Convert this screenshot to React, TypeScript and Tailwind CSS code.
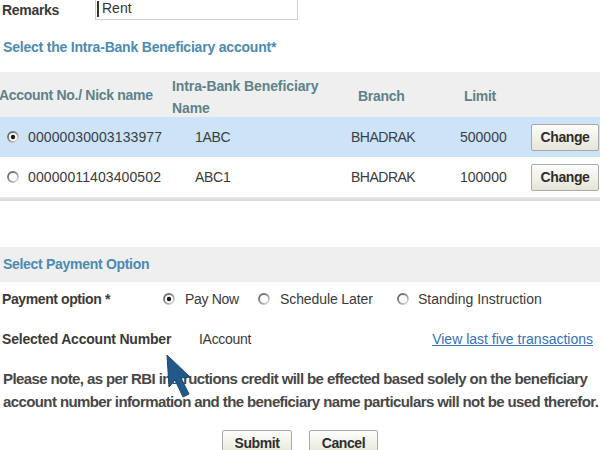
import React from "react";

function Radio({ checked }: { checked?: boolean }) {
  return (
    <svg width="12" height="12" viewBox="0 0 12 12" className="shrink-0">
      <defs>
        <linearGradient id={checked ? "rg1" : "rg0"} x1="0" y1="0" x2="1" y2="1">
          <stop offset="0" stopColor="#5a5a5a" />
          <stop offset="0.5" stopColor="#8f8f8f" />
          <stop offset="1" stopColor="#eeeeee" />
        </linearGradient>
      </defs>
      <circle cx="6" cy="6" r="5" fill="#fbfbfb" stroke={`url(#${checked ? "rg1" : "rg0"})`} strokeWidth="1.8" />
      {checked && <circle cx="6" cy="6" r="2.2" fill="#1a1a1a" />}
    </svg>
  );
}

function Btn({ children, w }: { children: React.ReactNode; w: string }) {
  return (
    <div
      className={`${w} h-[27px] flex items-center justify-center border border-[#a9a9a6] rounded-[2px] bg-gradient-to-b from-[#fdfdfb] to-[#e7e5d8] text-[14px] font-bold text-[#2e2e2e] tracking-[-0.4px]`}
    >
      {children}
    </div>
  );
}

export default function App() {
  return (
    <div className="relative w-[600px] h-[450px] overflow-hidden bg-white text-[#333] font-['Liberation_Sans',Arial,sans-serif]">
      {/* Remarks */}
      <div className="flex items-center h-[20px]">
        <div className="w-[95px] pl-[2px] text-[14px] font-bold text-[#3a3a3a] tracking-[-0.3px]">Remarks</div>
        <div className="w-[203px] h-[23px] -mt-[3px] border border-[#cfcfcf] flex items-center">
          <div className="w-[2px] h-[16px] bg-[#333] ml-[1px]" />
          <span className="ml-[3px] text-[14px] text-[#333]">Rent</span>
        </div>
      </div>

      {/* Title */}
      <div className="mt-[17px] h-[20px] flex items-center pl-[3px] text-[14px] font-bold text-[#4b8bb2] tracking-[-0.2px]">
        Select the Intra-Bank Beneficiary account*
      </div>

      {/* Table header */}
      <div className="mt-[15px] h-[45px] bg-[#efefef] flex items-center text-[14px] font-bold text-[#5d8289] tracking-[-0.3px]">
        <div className="w-[173px] -ml-[1px] pt-[2px]">Account No./ Nick name</div>
        <div className="w-[186px] leading-[22px] pt-[4px] tracking-[-0.1px]">
          <div>Intra-Bank Beneficiary</div>
          <div>Name</div>
        </div>
        <div className="w-[106px] pt-[3px]">Branch</div>
        <div className="pt-[3px]">Limit</div>
      </div>

      {/* Row 1 */}
      <div className="h-[40px] bg-[#cde3f8] flex items-center text-[14px] text-[#3a3f45]">
        <div className="w-[28px] pl-[7px] flex items-center">
          <Radio checked />
        </div>
        <div className="w-[167px] tracking-[0.1px]">00000030003133977</div>
        <div className="w-[156px] tracking-[-0.3px]">1ABC</div>
        <div className="w-[109px] tracking-[-0.5px]">BHADRAK</div>
        <div className="w-[71px]">500000</div>
        <Btn w="w-[68px]">Change</Btn>
      </div>

      {/* Row 2 */}
      <div className="h-[40px] bg-white flex items-center text-[14px] text-[#3a3a3a]">
        <div className="w-[28px] pl-[7px] flex items-center">
          <Radio />
        </div>
        <div className="w-[167px] tracking-[0.1px]">00000011403400502</div>
        <div className="w-[156px] tracking-[-0.3px]">ABC1</div>
        <div className="w-[109px] tracking-[-0.5px]">BHADRAK</div>
        <div className="w-[71px]">100000</div>
        <Btn w="w-[68px]">Change</Btn>
      </div>
      <div className="h-[4px] bg-gradient-to-b from-[#e6e6e6] to-[#d9d9d9]" />

      {/* Payment option band */}
      <div className="mt-[46px] h-[35px] bg-[#efefef] flex items-center pl-[3px] text-[14px] font-bold text-[#4b8bb2] tracking-[-0.3px]">
        Select Payment Option
      </div>

      {/* Payment option row */}
      <div className="mt-[7px] h-[20px] flex items-center text-[14px]">
        <div className="w-[163px] pl-[2px] font-bold text-[#3a3a3a] tracking-[-0.4px]">Payment option *</div>
        <Radio checked />
        <span className="ml-[10px] w-[73px] text-[#3a3a3a] tracking-[-0.3px]">Pay Now</span>
        <Radio />
        <span className="ml-[10px] w-[117px] text-[#3a3a3a] tracking-[-0.1px]">Schedule Later</span>
        <Radio />
        <span className="ml-[9px] text-[#3a3a3a] tracking-[0px]">Standing Instruction</span>
      </div>

      {/* Selected Account Number row */}
      <div className="mt-[20px] h-[20px] flex items-center text-[14px]">
        <div className="w-[199px] pl-[2px] font-bold text-[#3a3a3a] tracking-[-0.2px]">Selected Account Number</div>
        <span className="text-[#3a3a3a] tracking-[-0.3px]">IAccount</span>
        <a className="ml-auto mr-[7px] text-[#3670b6] underline" href="#">
          View last five transactions
        </a>
      </div>

      {/* Note */}
      <div className="mt-[18px] pl-[3px] text-[15px] leading-[23px] font-bold text-[#474747] tracking-[-0.6px] whitespace-nowrap">
        Please note, as per RBI instructions credit will be effected based solely on the beneficiary
        <br />
        account number information and the beneficiary name particulars will not be used therefor.
      </div>

      {/* Buttons */}
      <div className="mt-[17px] flex justify-center gap-[17px]">
        <Btn w="w-[70px]">Submit</Btn>
        <Btn w="w-[69px]">Cancel</Btn>
      </div>

      {/* Mouse cursor */}
      <svg className="absolute left-[160px] top-[350px]" width="40" height="52" viewBox="0 0 40 52">
        <polygon
          points="7,5 9,37 15,30 23,47 29,44 21,28 30,27"
          fill="#23598a"
          stroke="#1b4670"
          strokeWidth="1"
          strokeLinejoin="round"
        />
      </svg>
    </div>
  );
}
